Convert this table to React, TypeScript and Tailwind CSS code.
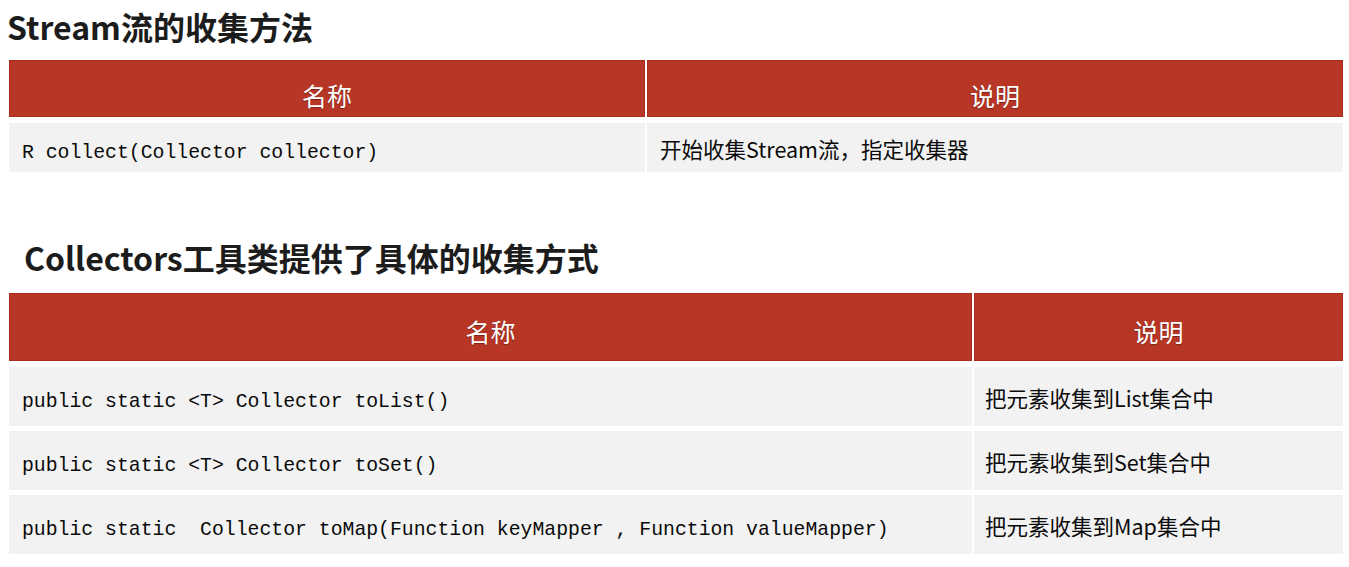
import React from "react";

const cjk = '"Noto Sans CJK SC", "Noto Sans", sans-serif';
const mono = '"Liberation Mono", "DejaVu Sans Mono", "Noto Sans CJK SC", monospace';

function HeaderCell({ children, pt }: { children: React.ReactNode; pt: string }) {
  return (
    <div
      className={`flex items-center justify-center bg-[#b83626] border border-[#a92c1e] text-white text-[25px] ${pt}`}
      style={{ fontFamily: cjk, textShadow: "0 1px 1px rgba(0,0,0,0.35)" }}
    >
      {children}
    </div>
  );
}

export default function App() {
  const rows2 = [
    ["public static <T> Collector toList()", "把元素收集到List集合中"],
    ["public static <T> Collector toSet()", "把元素收集到Set集合中"],
    [
      "public static  Collector toMap(Function keyMapper , Function valueMapper)",
      "把元素收集到Map集合中",
    ],
  ];
  return (
    <div className="w-[1349px] h-[567px] bg-white overflow-hidden">
      <div
        className="mt-[6px] pl-[7px] h-[40px] leading-[40px] text-[32px] font-bold text-[#1c1c1c]"
        style={{ fontFamily: cjk }}
      >
        Stream流的收集方法
      </div>

      <div className="ml-[9px] mt-[14px] w-[1334px] grid grid-cols-[636px_696px] gap-x-[2px] gap-y-[6px]">
        <div className="h-[57px] grid">
          <HeaderCell pt="pt-[14px]">名称</HeaderCell>
        </div>
        <div className="h-[57px] grid">
          <HeaderCell pt="pt-[14px]">说明</HeaderCell>
        </div>
        <div
          className="h-[49px] bg-[#f2f2f2] flex items-center pt-[12px] pl-[13px] text-[19.8px] text-[#0a0a0a] whitespace-pre"
          style={{ fontFamily: mono }}
        >
          R collect(Collector collector)
        </div>
        <div
          className="h-[49px] bg-[#f2f2f2] flex items-center pt-[4px] pl-[13px] text-[21.5px] text-[#0a0a0a]"
          style={{ fontFamily: cjk }}
        >
          开始收集Stream流，指定收集器
        </div>
      </div>

      <div
        className="mt-[63px] pl-[24px] h-[44px] leading-[44px] text-[32px] font-bold text-[#1c1c1c]"
        style={{ fontFamily: cjk }}
      >
        Collectors工具类提供了具体的收集方式
      </div>

      <div className="ml-[9px] mt-[14px] w-[1334px] flex flex-col">
        <div className="h-[68px] grid grid-cols-[963px_369px] gap-x-[2px]">
          <HeaderCell pt="pt-[10px]">名称</HeaderCell>
          <HeaderCell pt="pt-[10px]">说明</HeaderCell>
        </div>
        <div className="mt-[6px] flex flex-col gap-[5px]">
          {rows2.map(([a, b], i) => (
            <div key={i} className="h-[59px] grid grid-cols-[963px_369px] gap-x-[2px]">
              <div
                className="bg-[#f2f2f2] flex items-center pt-[12px] pl-[13px] text-[19.8px] text-[#0a0a0a] whitespace-pre"
                style={{ fontFamily: mono }}
              >
                {a}
              </div>
              <div
                className="bg-[#f2f2f2] flex items-center pt-[4px] pl-[11px] text-[21.5px] text-[#0a0a0a]"
                style={{ fontFamily: cjk }}
              >
                {b}
              </div>
            </div>
          ))}
        </div>
      </div>
    </div>
  );
}
